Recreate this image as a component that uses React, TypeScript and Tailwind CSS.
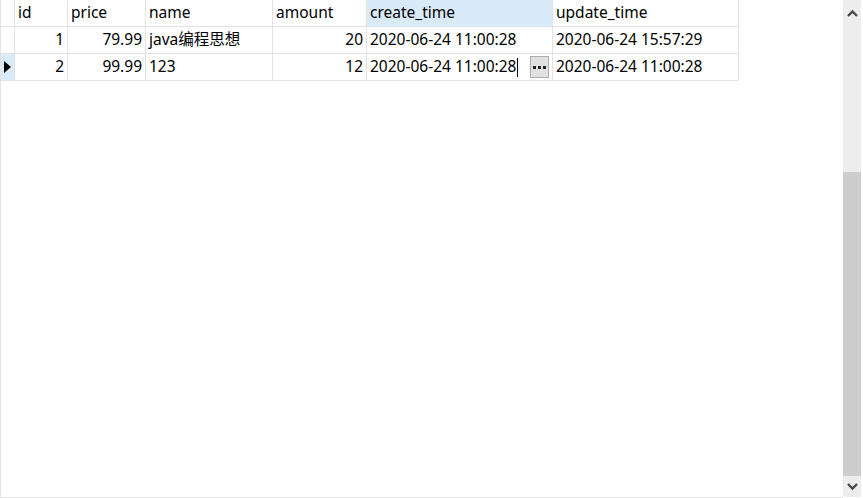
const columns = [
  { key: "id", label: "id", width: 53, align: "right" },
  { key: "price", label: "price", width: 78, align: "right" },
  { key: "name", label: "name", width: 127, align: "left" },
  { key: "amount", label: "amount", width: 94, align: "right" },
  { key: "create_time", label: "create_time", width: 186, align: "left" },
  { key: "update_time", label: "update_time", width: 186, align: "left" },
] as const;

const rows: Record<string, string>[] = [
  {
    id: "1",
    price: "79.99",
    name: "java编程思想",
    amount: "20",
    create_time: "2020-06-24 11:00:28",
    update_time: "2020-06-24 15:57:29",
  },
  {
    id: "2",
    price: "99.99",
    name: "123",
    amount: "12",
    create_time: "2020-06-24 11:00:28",
    update_time: "2020-06-24 11:00:28",
  },
];

function Chevron({ up }: { up?: boolean }) {
  return (
    <svg width="11" height="8" viewBox="0 0 11 8">
      <path
        d={up ? "M1 7 L5.5 2.5 L10 7" : "M1 1 L5.5 5.5 L10 1"}
        fill="none"
        stroke="#4a4a4a"
        strokeWidth="2.4"
      />
    </svg>
  );
}

function Scrollbar() {
  return (
    <div className="w-[18px] h-[497px] shrink-0 bg-[#ededed] flex flex-col">
      <div className="h-[26px] shrink-0 flex items-center justify-center">
        <Chevron up />
      </div>
      <div className="h-[146px] shrink-0" />
      <div className="flex-1 bg-[#cdcdcd]" />
      <div className="h-[21px] shrink-0 flex items-center justify-center">
        <Chevron />
      </div>
    </div>
  );
}

function EllipsisButton() {
  return (
    <span className="w-[19px] h-[22px] bg-[#e1e1e1] border border-[#adadad] flex items-center justify-center gap-[2px]">
      <span className="w-[3px] h-[3px] bg-[#222]" />
      <span className="w-[3px] h-[3px] bg-[#222]" />
      <span className="w-[3px] h-[3px] bg-[#222]" />
    </span>
  );
}

export default function App() {
  return (
    <div
      className="w-[863px] h-[498px] bg-white flex text-black"
      style={{ fontFamily: '"Noto Sans", "Noto Sans CJK SC", sans-serif' }}
    >
      <div className="flex-1 min-w-0 flex flex-col border-l border-b border-[#e3e3e3]">
        {/* header */}
        <div className="flex h-[27px] text-[15.5px]">
          <div className="w-[14px] border-r border-b border-[#e3e3e3]" />
          {columns.map((c) => (
            <div
              key={c.key}
              className={`flex items-center px-[3px] border-r border-b border-[#e3e3e3] ${
                c.key === "create_time" ? "bg-[#d9eaf8]" : ""
              }`}
              style={{ width: c.width }}
            >
              {c.label}
            </div>
          ))}
        </div>
        {rows.map((r, i) => (
          <div key={i} className="flex h-[27px] text-[15.5px]">
            <div
              className={`w-[14px] flex items-center justify-center border-r border-b border-[#e3e3e3] ${
                i === 1 ? "bg-[#d9eaf8]" : ""
              }`}
            >
              {i === 1 && (
                <svg width="7" height="12" viewBox="0 0 7 12">
                  <path d="M0 0 L7 6 L0 12 Z" fill="#000" />
                </svg>
              )}
            </div>
            {columns.map((c) => {
              const editing = i === 1 && c.key === "create_time";
              return (
                <div
                  key={c.key}
                  className={`flex items-center px-[3px] border-r border-b border-[#e3e3e3] whitespace-nowrap ${
                    c.align === "right" ? "justify-end" : ""
                  }`}
                  style={{ width: c.width }}
                >
                  {editing ? (
                    <div className="flex items-center w-full">
                      <span>{r[c.key]}</span>
                      <span className="w-px h-[19px] bg-black ml-px" />
                      <span className="flex-1" />
                      <EllipsisButton />
                    </div>
                  ) : (
                    r[c.key]
                  )}
                </div>
              );
            })}
          </div>
        ))}
      </div>
      <Scrollbar />
      <div className="w-[2px] shrink-0" />
    </div>
  );
}
